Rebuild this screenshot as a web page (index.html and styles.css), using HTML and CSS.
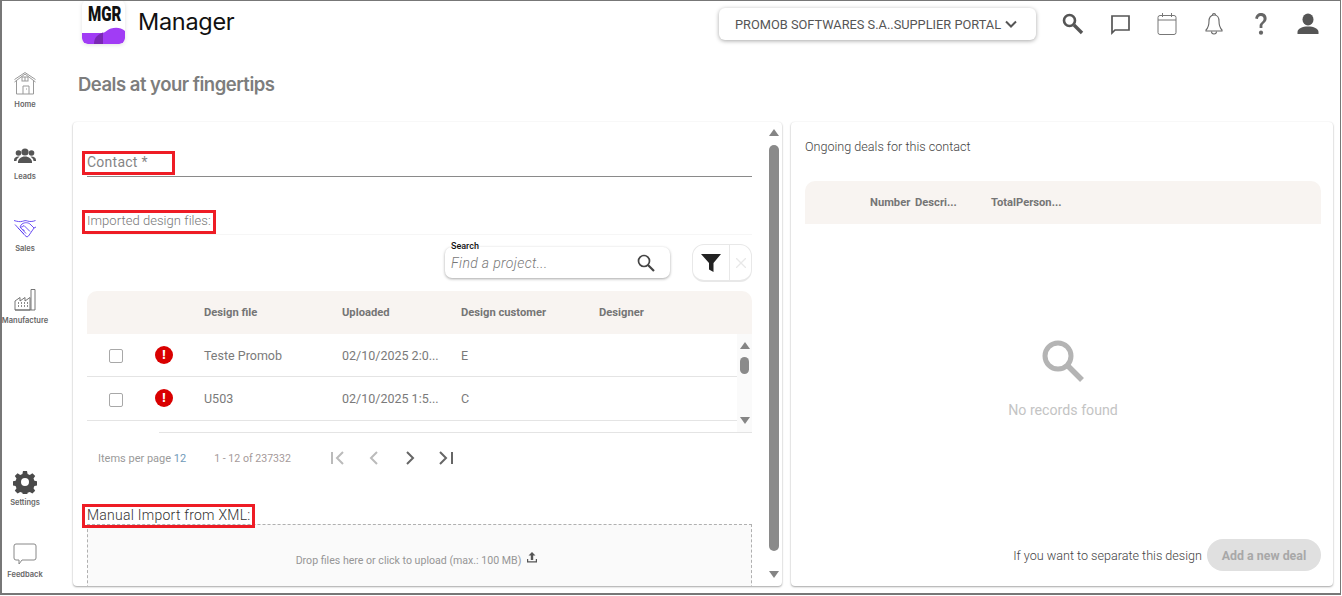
FILE: index.html
```html
<!DOCTYPE html>
<html lang="en">
  <head>
    <meta charset="UTF-8" />
    <meta name="viewport" content="width=device-width, initial-scale=1.0" />
    <title>Manager</title>
    <link rel="stylesheet" href="styles.css">
  </head>
  <body>
    <div class="frame">
      <nav class="sidebar">
        <a class="nav-item">
          <svg width="24" height="24" viewBox="0 0 24 24" fill="none" stroke="#999" stroke-width="1"><path d="M1.5 10 12 2l10.5 8M3.5 9v13h17V9M1.5 7.5 12 .5l10.5 7"/><rect x="9" y="5" width="6" height="4"/><path d="M12 5v4M10 22v-8h6v8M13 17h1"/></svg>
          <span>Home</span>
        </a>
        <a class="nav-item">
          <svg width="24" height="24" viewBox="0 0 24 24" fill="#555"><circle cx="12" cy="8" r="3.6"/><circle cx="5.5" cy="9" r="2.8"/><circle cx="18.5" cy="9" r="2.8"/><path d="M5 18c0-3 3-5.5 7-5.5s7 2.5 7 5.5v1H5z"/><path d="M1 16c0-2 2-3.500 4.500-3.500l1 .3C4.500 14 3.500 15.500 3.500 17H1zM23 16c0-2-2-3.500-4.500-3.500l-1 .3c2 1.200 3 2.700 3 4.200H23z"/></svg>
          <span>Leads</span>
        </a>
        <a class="nav-item">
          <svg width="24" height="24" viewBox="0 0 24 24" fill="none" stroke="#5b3df0" stroke-width=".9"><path d="M1 4.5c3 1 6 1.500 8.500.8 2-.6 3-1 5-.3 2 .7 5 .8 8-.5M2 8.500l10 11 2 1.500 1.500-1L21 12l2-1M9 8c3-2 6-1.500 8 0l4 4M9 8l-2 2.500c1 1 2.500.5 4-1l6 6M5 12l6 6M7 11l6 6.500M9.500 13l2 2"/></svg>
          <span>Sales</span>
        </a>
        <a class="nav-item">
          <svg width="24" height="24" viewBox="0 0 24 24" fill="none" stroke="#666" stroke-width=".9"><path d="M2 22V13l5-3.500V13l5-3.500V13l5-3.500V22z"/><path d="M18 22V1.500h4V22H2"/><path d="M5 15h1M8 15h1M11 15h1M14 15h1M5 18h1M8 18h1M11 18h1M14 18h1" stroke-width="1.4"/></svg>
          <span>Manufacture</span>
        </a>
        <div class="nav-spacer"></div>
        <a class="nav-item">
          <svg width="24" height="24" viewBox="0 0 24 24" fill="#4a4a4a"><path fill-rule="evenodd" d="M10 1h4l.6 3 2.200.9 2.600-1.700 2.800 2.800-1.700 2.600.9 2.200 3 .6v4l-3 .6-.9 2.200 1.700 2.600-2.800 2.800-2.600-1.700-2.200.9-.6 3h-4l-.6-3-2.200-.9-2.600 1.700-2.800-2.800 1.700-2.600-.9-2.200-3-.6v-4l3-.6.9-2.200L1.800 6l2.800-2.800 2.600 1.700L9.400 4zM12 8a4 4 0 1 0 0 8 4 4 0 0 0 0-8z"/></svg>
          <span>Settings</span>
        </a>
        <a class="nav-item">
          <svg width="24" height="24" viewBox="0 0 24 24" fill="none" stroke="#888" stroke-width="1"><path d="M3 2h18a2 2 0 0 1 2 2v12a2 2 0 0 1-2 2H9l-3 4v-4H3a2 2 0 0 1-2-2V4a2 2 0 0 1 2-2z"/></svg>
          <span>Feedback</span>
        </a>
      </nav>

      <div class="main">
        <header class="topbar">
          <div class="logo">
            <span class="logo-text">MGR</span>
            <svg class="logo-wave" width="43" height="17" viewBox="0 0 43 17"><path d="M0 6h20c3 0 5-3 9-4.500 5-1.500 10-1 14 2.500v8a5 5 0 0 1-5 5H5a5 5 0 0 1-5-5z" fill="#a13cf5"/><path d="M12 17c0-5 2-9 9-11.500V17z" fill="#7a28b5"/></svg>
          </div>
          <div class="brand">Manager</div>
          <button class="company-select">PROMOB SOFTWARES S.A..SUPPLIER PORTAL
            <svg width="12" height="8" viewBox="0 0 12 8" fill="none" stroke="#555" stroke-width="2"><path d="M1 1.500 6 6.500l5-5"/></svg>
          </button>
          <div class="top-icons">
            <svg width="24" height="24" viewBox="0 0 24 24" fill="none" stroke="#555"><circle cx="8.500" cy="8.500" r="5.500" stroke-width="2.600"/><path d="m13 13 8 8" stroke-width="3.400"/></svg>
            <svg width="24" height="24" viewBox="0 0 24 24" fill="none" stroke="#555" stroke-width="1.700"><path d="M4 4h17v14H7l-3 3z"/></svg>
            <svg width="24" height="24" viewBox="0 0 24 24" fill="none" stroke="#777" stroke-width="1"><rect x="3" y="3.500" width="18" height="19" rx="2"/><path d="M3 8h18M7.500 1v4M16.500 1v4"/></svg>
            <svg width="24" height="24" viewBox="0 0 24 24" fill="none" stroke="#666" stroke-width="1.100"><path d="M12 3c-3.500 0-5 3-5 6 0 5-1 7-3 9v1h16v-1c-2-2-3-4-3-9 0-3-1.500-6-5-6z"/><path d="M10.500 3a1.500 1.500 0 0 1 3 0M9.500 19.500a2.500 2.500 0 0 0 5 0"/></svg>
            <svg width="24" height="24" viewBox="0 0 24 24" fill="#666"><path d="M10.600 16v-2.500c0-3 4-3.500 4-6.800 0-1.700-1.100-2.800-2.700-2.800-1.700 0-2.800 1.200-3 3.200L6.200 6.600C6.600 3 9 1 12.100 1c3.300 0 5.500 2.200 5.500 5.400 0 4.300-4.200 4.800-4.200 7.400V16z"/><circle cx="12" cy="20.700" r="2.100"/></svg>
            <svg width="24" height="24" viewBox="0 0 24 24" fill="#555"><ellipse cx="12" cy="7.500" rx="5.500" ry="6"/><path d="M1.500 22v-2c0-3.500 5-5.500 10.500-5.500S22.500 16.500 22.500 20v2z"/></svg>
          </div>
        </header>

        <h1 class="page-title">Deals at your fingertips</h1>

        <div class="panels">
          <section class="panel left-panel">
            <div class="left-content">
              <div class="contact-field">
                <label class="marked">Contact *</label>
              </div>

              <div class="section-head">
                <span class="marked thin">Imported design files:</span>
              </div>

              <div class="toolbar">
                <div class="search-box">
                  <span class="search-label">Search</span>
                  <span class="search-hint">Find a project...</span>
                  <svg width="20" height="20" viewBox="0 0 20 20" fill="none" stroke="#444"><circle cx="8" cy="8" r="5.500" stroke-width="1.700"/><path d="m12 12 6 6" stroke-width="2.200"/></svg>
                </div>
                <div class="filter-group">
                  <div class="filter-btn">
                    <svg width="22" height="20" viewBox="0 0 22 20" fill="#222"><path d="M1 1h20l-7.500 9v9l-4.500-2.500V10z"/></svg>
                  </div>
                  <div class="filter-clear">
                    <svg width="10" height="10" viewBox="0 0 10 10" stroke="#e8e8e8" stroke-width="1.300"><path d="m0 0 10 10M10 0 0 10"/></svg>
                  </div>
                </div>
              </div>

              <div class="table-head files-cols">
                <span></span><span></span>
                <span>Design file</span>
                <span>Uploaded</span>
                <span>Design customer</span>
                <span>Designer</span>
              </div>
              <div class="table-scroll">
                <div class="table-rows">
                  <div class="table-row files-cols">
                    <span class="check"></span>
                    <span class="error-dot">!</span>
                    <span>Teste Promob</span>
                    <span>02/10/2025 2:0...</span>
                    <span>E</span>
                    <span></span>
                  </div>
                  <div class="table-row files-cols">
                    <span class="check"></span>
                    <span class="error-dot">!</span>
                    <span>U503</span>
                    <span>02/10/2025 1:5...</span>
                    <span>C</span>
                    <span></span>
                  </div>
                </div>
                <div class="mini-scrollbar">
                  <i class="arrow-up"></i>
                  <b class="mini-thumb"></b>
                  <i class="arrow-down"></i>
                </div>
              </div>
              <div class="table-end"></div>

              <div class="pager">
                <span class="pager-size">Items per page <em>12</em></span>
                <span class="pager-range">1 - 12 of 237332</span>
                <div class="pager-btns">
                  <svg width="18" height="18" viewBox="0 0 18 18" fill="none" stroke="#bbb" stroke-width="2"><path d="M3 3v12M14 3 8 9l6 6"/></svg>
                  <svg width="18" height="18" viewBox="0 0 18 18" fill="none" stroke="#bbb" stroke-width="2"><path d="m12 3-6 6 6 6"/></svg>
                  <svg width="18" height="18" viewBox="0 0 18 18" fill="none" stroke="#666" stroke-width="2"><path d="m6 3 6 6-6 6"/></svg>
                  <svg width="18" height="18" viewBox="0 0 18 18" fill="none" stroke="#666" stroke-width="2"><path d="m3 3 6 6-6 6M15 3v12"/></svg>
                </div>
              </div>

              <div class="manual-head">
                <span class="marked dark">Manual Import from XML:</span>
              </div>
              <div class="dropzone">
                <span>Drop files here or click to upload (max.: 100 MB)</span>
                <svg width="12" height="12" viewBox="0 0 12 12" fill="#555"><path d="M6 0 2.500 3.500h2.300V8h2.400V3.500h2.300zM1 7v3.500h10V7h-1.200v2.300H2.200V7z"/></svg>
              </div>
            </div>
            <div class="page-scrollbar">
              <i class="arrow-up"></i>
              <b class="page-thumb"></b>
              <i class="arrow-down"></i>
            </div>
          </section>

          <section class="panel right-panel">
            <div class="right-title">Ongoing deals for this contact</div>
            <div class="table-head deals-cols">
              <span>Number</span>
              <span>Descri...</span>
              <span>TotalPerson...</span>
            </div>
            <div class="empty-state">
              <svg width="44" height="44" viewBox="0 0 44 44" fill="none" stroke="#b4b4b4"><circle cx="17" cy="17" r="13" stroke-width="5"/><path d="m26 26 15 15" stroke-width="5.500"/></svg>
              <p>No records found</p>
            </div>
            <div class="right-footer">
              <span>If you want to separate this design</span>
              <button class="add-deal">Add a new deal</button>
            </div>
          </section>
        </div>
      </div>
    </div>
  </body>
</html>
```

FILE: styles.css
```css
* {
  box-sizing: border-box;
}

html,
body {
  height: 100%;
}

body {
  margin: 0;
  background: #fff;
  font-family: "Roboto", sans-serif;
  overflow: hidden;
}

.frame {
  display: flex;
  width: 1341px;
  height: 595px;
  border: 1px solid #777;
  border-left-width: 2px;
  border-bottom-width: 2px;
  overflow: hidden;
}

/* side navigation */
.sidebar {
  width: 71px;
  flex: none;
  display: flex;
  flex-direction: column;
  padding-top: 71px;
}

.nav-item {
  width: 46px;
  height: 72px;
  flex: none;
  display: flex;
  flex-direction: column;
  align-items: center;
  font-family: "Inter", sans-serif;
  font-size: 7.5px;
  font-weight: 600;
  color: #666;
}

.nav-item span {
  margin-top: 4px;
  white-space: nowrap;
}

.nav-spacer {
  height: 110px;
  flex: none;
}

/* top bar */
.main {
  flex: 1;
  min-width: 0;
  display: flex;
  flex-direction: column;
  padding-bottom: 7px;
}

.topbar {
  height: 44px;
  flex: none;
  display: flex;
  align-items: flex-start;
  padding-left: 9px;
}

.logo {
  width: 43px;
  height: 44px;
  margin-top: -1px;
  position: relative;
  background: #fff;
  border-radius: 6px;
  box-shadow: 0 1px 4px rgba(0, 0, 0, 0.12);
  overflow: hidden;
  text-align: center;
}

.logo-text {
  display: block;
  font-size: 21px;
  font-weight: 900;
  line-height: 29px;
  color: #111;
  transform: scaleX(0.72);
}

.logo-wave {
  position: absolute;
  left: 0;
  bottom: 0;
}

.brand {
  width: 96px;
  margin-left: 13px;
  font-family: "Inter", sans-serif;
  font-size: 23.5px;
  line-height: 42px;
  color: #111;
  letter-spacing: -0.3px;
}

.company-select {
  margin-left: 485px;
  margin-top: 7px;
  width: 317px;
  height: 32px;
  flex: none;
  display: flex;
  align-items: center;
  gap: 4px;
  padding: 0 0 0 16px;
  border: none;
  border-radius: 6px;
  background: #fff;
  box-shadow: 0 1px 4px rgba(0, 0, 0, 0.35);
  font-family: "Roboto", sans-serif;
  font-size: 12.8px;
  color: #555;
  white-space: nowrap;
}

.top-icons {
  display: flex;
  gap: 23px;
  margin-left: 25px;
  margin-top: 11px;
}

.page-title {
  margin: 0;
  height: 77px;
  flex: none;
  padding: 27px 0 0 5px;
  font-family: "Inter", sans-serif;
  font-size: 18.5px;
  line-height: 24px;
  font-weight: 600;
  letter-spacing: -0.5px;
  color: #7d7d7d;
}

/* panels */
.panels {
  flex: 1;
  min-height: 0;
  display: flex;
  gap: 9px;
}

.panel {
  background: #fff;
  border-radius: 4px;
  box-shadow: 0 1px 2px rgba(0, 0, 0, 0.35), 0 0 2px rgba(0, 0, 0, 0.06);
}

.left-panel {
  width: 709px;
  display: flex;
  overflow: hidden;
}

.left-content {
  width: 679px;
  flex: none;
  padding: 29px 0 0 14px;
}

.marked {
  display: inline-block;
  height: 24px;
  margin-left: -5px;
  padding-left: 2px;
  padding-right: 2px;
  border: 3px solid #ee1c25;
  font-size: 14px;
  line-height: 16px;
  color: #858585;
  white-space: nowrap;
}

.marked.thin {
  font-size: 13px;
  font-weight: 300;
  letter-spacing: 0.05px;
  color: #777;
}

.marked.dark {
  position: relative;
  z-index: 1;
  font-weight: 300;
  letter-spacing: 0.25px;
  color: #333;
}

.contact-field {
  height: 26px;
  border-bottom: 1px solid #8a8a8a;
  width: 665px;
}

.contact-field .marked {
  width: 93px;
  letter-spacing: 0.25px;
}

.section-head {
  margin-top: 33px;
  height: 25px;
  width: 665px;
  border-bottom: 1px solid #f6f6f6;
}

.toolbar {
  width: 665px;
  height: 56px;
  display: flex;
  justify-content: flex-end;
  padding-top: 9px;
}

.search-box {
  position: relative;
  width: 225px;
  height: 31px;
  margin-top: 3px;
  margin-right: 22px;
  display: flex;
  align-items: center;
  justify-content: space-between;
  padding: 0 14px 0 6px;
  border-radius: 7px;
  background: #fff;
  box-shadow: 0 1px 3px rgba(0, 0, 0, 0.35);
}

.search-label {
  position: absolute;
  left: 6px;
  top: -6px;
  font-size: 9px;
  line-height: 10px;
  font-weight: 500;
  color: #111;
}

.search-hint {
  font-size: 14px;
  font-style: italic;
  font-weight: 300;
  letter-spacing: 0.35px;
  color: #777;
}

.filter-group {
  width: 60px;
  height: 38px;
  display: flex;
  border: 1px solid #e8e8e8;
  border-bottom-width: 2px;
  border-radius: 12px;
}

.filter-btn {
  width: 37px;
  display: flex;
  align-items: center;
  justify-content: center;
  border-right: 1px solid #e8e8e8;
}

.filter-clear {
  flex: 1;
  display: flex;
  align-items: center;
  justify-content: center;
}

/* tables */
.table-head {
  height: 43px;
  display: grid;
  align-items: center;
  background: #f8f4f1;
  border-radius: 10px 10px 0 0;
  font-size: 11.2px;
  font-weight: 700;
  color: #757575;
}

.files-cols {
  grid-template-columns: 58px 59px 138px 119px 138px 1fr;
}

.left-content .table-head {
  width: 665px;
}

.table-scroll {
  width: 665px;
  height: 98px;
  display: flex;
}

.table-rows {
  flex: 1;
}

.table-row {
  height: 43px;
  display: grid;
  align-items: center;
  border-bottom: 1px solid #e4e4e4;
  font-size: 12.5px;
  color: #7a7a7a;
}

.table-row + .table-row {
  height: 44px;
}

.check {
  width: 14px;
  height: 14px;
  margin-left: 22px;
  margin-top: 2px;
  border: 1px solid #a8a8a8;
  border-radius: 2px;
}

.error-dot {
  width: 18px;
  height: 18px;
  margin-left: 10px;
  margin-top: -1px;
  border-radius: 50%;
  background: #d90000;
  color: #fff;
  font-size: 12px;
  font-weight: 900;
  line-height: 18px;
  text-align: center;
}

.mini-scrollbar {
  width: 15px;
  display: flex;
  flex-direction: column;
  align-items: center;
  padding: 8px 0 8px;
  background: #fafafa;
}

.mini-thumb {
  width: 9px;
  height: 17px;
  margin-top: 8px;
  border-radius: 5px;
  background: #8a8a8a;
}

.mini-scrollbar .arrow-down {
  margin-top: auto;
}

.arrow-up,
.arrow-down {
  display: block;
  width: 0;
  height: 0;
  border-left: 5px solid transparent;
  border-right: 5px solid transparent;
}

.arrow-up {
  border-bottom: 7px solid #858585;
}

.arrow-down {
  border-top: 7px solid #858585;
}

.table-end {
  width: 593px;
  margin-left: 72px;
  border-top: 1px solid #e4e4e4;
}

.pager {
  width: 665px;
  height: 50px;
  display: flex;
  align-items: center;
  padding-left: 11px;
  font-size: 11px;
  color: #9a9a9a;
}

.pager-size em {
  font-style: normal;
  color: #6f9ab8;
}

.pager-range {
  margin-left: 28px;
  font-size: 10.6px;
  color: #a59a9a;
}

.pager-btns {
  display: flex;
  gap: 18px;
  margin-left: 38px;
}

.manual-head {
  margin-top: 21px;
  height: 20px;
}

.dropzone {
  width: 665px;
  height: 90px;
  display: flex;
  justify-content: center;
  gap: 5px;
  padding: 29px 5px 0 0;
  border: 1px dashed #b0b0b0;
  background: #fafafa;
  font-size: 10.6px;
  line-height: 14px;
  color: #969696;
}

.dropzone svg {
  margin-top: -2px;
}

.page-scrollbar {
  width: 10px;
  margin-left: 17px;
  flex: none;
  display: flex;
  flex-direction: column;
  align-items: center;
  padding: 7px 0 8px;
}

.page-thumb {
  width: 10px;
  height: 406px;
  margin-top: 9px;
  border-radius: 5px;
  background: #8a8a8a;
}

.page-scrollbar .arrow-down {
  margin-top: auto;
}

/* right side */
.right-panel {
  width: 542px;
  display: flex;
  flex-direction: column;
  padding: 0 12px 15px 14px;
}

.right-title {
  height: 59px;
  padding-top: 17px;
  font-size: 12.6px;
  line-height: 16px;
  font-weight: 300;
  color: #444;
}

.deals-cols {
  grid-template-columns: 45px 76px 1fr;
  padding-left: 65px;
  flex: none;
}

.empty-state {
  margin-top: 115px;
  display: flex;
  flex-direction: column;
  align-items: center;
  color: #c4c4c4;
  font-size: 14.2px;
}

.empty-state p {
  margin: 18px 0 0;
  line-height: 18px;
}

.right-footer {
  margin-top: auto;
  display: flex;
  align-items: center;
  justify-content: flex-end;
  gap: 5px;
  font-size: 12.6px;
  font-weight: 300;
  color: #444;
}

.add-deal {
  width: 114px;
  height: 32px;
  border: none;
  border-radius: 16px;
  background: #e0e0e0;
  font-family: "Roboto", sans-serif;
  font-size: 12.4px;
  font-weight: 700;
  color: #a8a8a8;
}
```
